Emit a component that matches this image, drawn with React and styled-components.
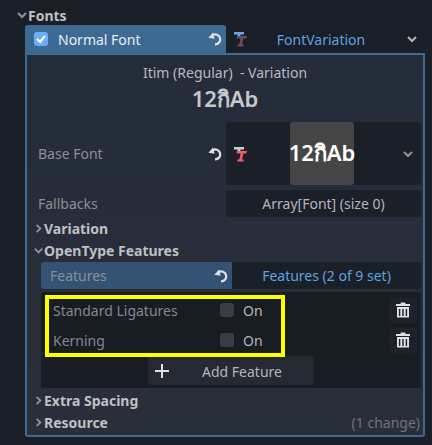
import React from 'react';
import styled, { createGlobalStyle } from 'styled-components';

const GlobalStyle = createGlobalStyle`
    html, body {
        margin: 0;
        padding: 0;
        background: #1b1f28;
    }
    body {
        font-family: 'Noto Sans', 'DejaVu Sans', sans-serif;
        font-size: 14px;
        color: #b4b6ba;
    }
`;

const RevertIcon = ({ color = '#e0e0e0' }) => (
    <svg width='16' height='16' viewBox='0 0 16 16'>
        <path
            d='M5.5 4.2 A5 5 0 1 1 8 13.4'
            fill='none'
            stroke={color}
            strokeWidth='2.2'
        />
        <path d='M1.4 6.8 L7.6 7.8 L6 1.4 Z' fill={color} />
    </svg>
);

const FontIcon = ({ top, stem }) => (
    <svg width='16' height='16' viewBox='0 0 16 16'>
        <path d='M1 1 H11 V3.4 H7.4 V6 H4.6 V3.4 H1 Z' fill={top} />
        <path d='M4 5 H14 L13.4 7.5 H10.4 L9 13.6 H10.6 V15.5 H4.4 V13.6 H6.2 L7.6 7.5 H3.5 Z' fill={stem} />
    </svg>
);

const Chevron = ({ right, color = '#8f9298', size = 12 }) => (
    <svg width={size} height={size} viewBox='0 0 12 12'>
        <path
            d={right ? 'M4 2 L8 6 L4 10' : 'M2 4 L6 8 L10 4'}
            fill='none'
            stroke={color}
            strokeWidth='2'
        />
    </svg>
);

const TrashIcon = () => (
    <svg width='16' height='16' viewBox='0 0 16 16'>
        <path
            d='M6 0.5 H10 L10.6 2 H15 V4 H1 V2 H5.4 Z M2 5 H14 V15.5 H2 Z'
            fill='#e0e0e0'
        />
        <path d='M4.6 7 V14 M8 7 V14 M11.4 7 V14' stroke='#1d2129' strokeWidth='1.4' />
    </svg>
);

const Page = styled.div`
    width: 432px;
    height: 445px;
    overflow: hidden;
    padding: 5px 7px 0 13px;
    box-sizing: border-box;
`;

const SectionHeader = styled.div`
    height: 20px;
    display: flex;
    align-items: center;
    padding-left: 3px;
    font-weight: 700;
    color: #bfc0c3;
    background: #1a1e26;
`;

const Panel = styled.div`
    margin-left: 12px;
    width: 400px;
`;

const TitleRow = styled.div`
    display: flex;
    height: 28px;
`;

const ToggleCell = styled.div`
    width: 201px;
    flex: none;
    background: #3d6a91;
    display: flex;
    align-items: center;
    padding: 0 3px 0 9px;
    box-sizing: border-box;
    border-radius: 3px 3px 0 0;
    color: #ebedef;
`;

const CheckBox = styled.span`
    width: 14px;
    height: 14px;
    border-radius: 3px;
    background: #6aaef5;
    display: flex;
    align-items: center;
    justify-content: center;
    margin-right: 10px;
`;

const Grow = styled.span`
    flex: 1;
`;

const PickerCell = styled.div`
    flex: 1;
    display: flex;
    align-items: center;
    padding: 0 7px;
    background: #1a1e26;
    color: #5fa2e0;
`;

const PickerLabel = styled.span`
    flex: 1;
    text-align: center;
    padding-right: 13px;
`;

const Body = styled.div`
    height: 384px;
    box-sizing: border-box;
    border: 2px solid #3f6a94;
    border-radius: 0 0 3px 3px;
    background: linear-gradient(#242c3a, #2a2e39);
`;

const Preview = styled.div`
    height: 67px;
    padding-top: 6px;
    box-sizing: border-box;
    text-align: center;
`;

const PreviewName = styled.div`
    height: 24px;
    line-height: 24px;
    white-space: pre;
    color: #b9bbbf;
`;

const PreviewSample = styled.div`
    font-size: 22px;
    font-weight: 600;
    line-height: 26px;
    color: #c6c7ca;
`;

const PropRow = styled.div`
    display: flex;
    height: ${p => p.$height}px;
    margin: ${p => p.$top || 0}px 2px ${p => p.$gap || 0}px ${p => p.$indent || 0}px;
`;

const PropLabel = styled.div`
    width: ${p => p.$width || 199}px;
    flex: none;
    box-sizing: border-box;
    padding: 0 3px 0 ${p => p.$pad || 11}px;
    display: flex;
    align-items: center;
    color: #8c8f95;
    border-radius: 3px 0 0 3px;
    background: ${p => p.$active ? '#345274' : 'transparent'};
`;

const Field = styled.div`
    flex: 1;
    display: flex;
    align-items: center;
    justify-content: center;
    background: #1b1f28;
    border-radius: 3px;
    color: ${p => p.$link ? '#5fa2e0' : '#b4b6ba'};
`;

const FontField = styled(Field)`
    justify-content: flex-start;
    padding: 0 7px;
`;

const Thumb = styled.div`
    width: 64px;
    height: 100%;
    margin-left: 41px;
    margin-right: auto;
    background: #454545;
    border-radius: 3px;
    color: #fff;
    display: flex;
    align-items: center;
    justify-content: center;
    font-size: 22px;
    font-weight: 600;
    white-space: nowrap;
`;

const Category = styled.div`
    display: flex;
    align-items: center;
    height: 22px;
    padding: 0 3px 0 6px;
    font-weight: 700;
    color: #bfc0c3;
`;

const ChangeNote = styled.span`
    margin-left: auto;
    font-weight: 400;
    color: #6e7278;
`;

const FeaturePanel = styled.div`
    position: relative;
    margin: 3px 2px 1px 14px;
    height: 96px;
    background: #181c23;
    border-radius: 3px;
    box-sizing: border-box;
    padding-top: 3px;
`;

const FeatureRow = styled.div`
    display: flex;
    align-items: center;
    height: 30px;
    padding-left: 12px;
    color: #85888e;
`;

const FeatureName = styled.span`
    width: 167px;
    flex: none;
`;

const SmallCheck = styled.span`
    width: 14px;
    height: 14px;
    border-radius: 3px;
    background: #3a3d42;
    margin-right: 9px;
`;

const OnLabel = styled.span`
    color: #b4b6ba;
`;

const TrashButton = styled.span`
    margin-left: auto;
    margin-right: 4px;
    width: 28px;
    height: 26px;
    border-radius: 3px;
    background: #1d2129;
    display: flex;
    align-items: center;
    justify-content: center;
`;

const AddButton = styled.div`
    margin: 1px 0 0 107px;
    width: 166px;
    height: 29px;
    border-radius: 3px;
    background: #252932;
    display: flex;
    align-items: center;
    padding: 1px 0 0 6px;
    box-sizing: border-box;
`;

const AddLabel = styled.span`
    flex: 1;
    text-align: center;
    color: #b4b6ba;
`;

const Highlight = styled.div`
    position: absolute;
    left: 4px;
    top: 3px;
    width: 240px;
    height: 62px;
    box-sizing: border-box;
    border: 4px solid #ffff00;
    pointer-events: none;
`;

const App = () => (
    <Page>
        <GlobalStyle />
        <SectionHeader>
            <Chevron />
            Fonts
        </SectionHeader>
        <Panel>
            <TitleRow>
                <ToggleCell>
                    <CheckBox>
                        <svg width='10' height='10' viewBox='0 0 10 10'>
                            <path d='M1 5 L4 8 L9 2' fill='none' stroke='#fff' strokeWidth='2' />
                        </svg>
                    </CheckBox>
                    Normal Font
                    <Grow />
                    <RevertIcon />
                </ToggleCell>
                <PickerCell>
                    <FontIcon top='#63a9ee' stem='#6d4a60' />
                    <PickerLabel>FontVariation</PickerLabel>
                    <Chevron color='#b4b6ba' />
                </PickerCell>
            </TitleRow>
            <Body>
                <Preview>
                    <PreviewName>Itim (Regular)  - Variation</PreviewName>
                    <PreviewSample>12กิAb</PreviewSample>
                </Preview>
                <PropRow $height={63} $gap={5}>
                    <PropLabel>
                        Base Font
                        <Grow />
                        <RevertIcon />
                    </PropLabel>
                    <FontField>
                        <FontIcon top='#c9cbce' stem='#ef5f5f' />
                        <Thumb>12กิAb</Thumb>
                        <Chevron color='#8f9298' />
                    </FontField>
                </PropRow>
                <PropRow $height={27}>
                    <PropLabel>Fallbacks</PropLabel>
                    <Field>Array[Font] (size 0)</Field>
                </PropRow>
                <Category>
                    <Chevron right size={11} />
                    Variation
                </Category>
                <Category>
                    <Chevron size={11} />
                    OpenType Features
                </Category>
                <PropRow $height={27} $indent={14} $top={1}>
                    <PropLabel $width={191} $active $pad={9}>
                        Features
                        <Grow />
                        <RevertIcon />
                    </PropLabel>
                    <Field $link>Features (2 of 9 set)</Field>
                </PropRow>
                <FeaturePanel>
                    <FeatureRow>
                        <FeatureName>Standard Ligatures</FeatureName>
                        <SmallCheck />
                        <OnLabel>On</OnLabel>
                        <TrashButton><TrashIcon /></TrashButton>
                    </FeatureRow>
                    <FeatureRow>
                        <FeatureName>Kerning</FeatureName>
                        <SmallCheck />
                        <OnLabel>On</OnLabel>
                        <TrashButton><TrashIcon /></TrashButton>
                    </FeatureRow>
                    <AddButton>
                        <svg width='16' height='16' viewBox='0 0 16 16'>
                            <path d='M1 8 H15 M8 1 V15' stroke='#e0e0e0' strokeWidth='2' />
                        </svg>
                        <AddLabel>Add Feature</AddLabel>
                    </AddButton>
                    <Highlight />
                </FeaturePanel>
                <Category>
                    <Chevron right size={11} />
                    Extra Spacing
                </Category>
                <Category>
                    <Chevron right size={11} />
                    Resource
                    <ChangeNote>(1 change)</ChangeNote>
                </Category>
            </Body>
        </Panel>
    </Page>
);

export default App;
